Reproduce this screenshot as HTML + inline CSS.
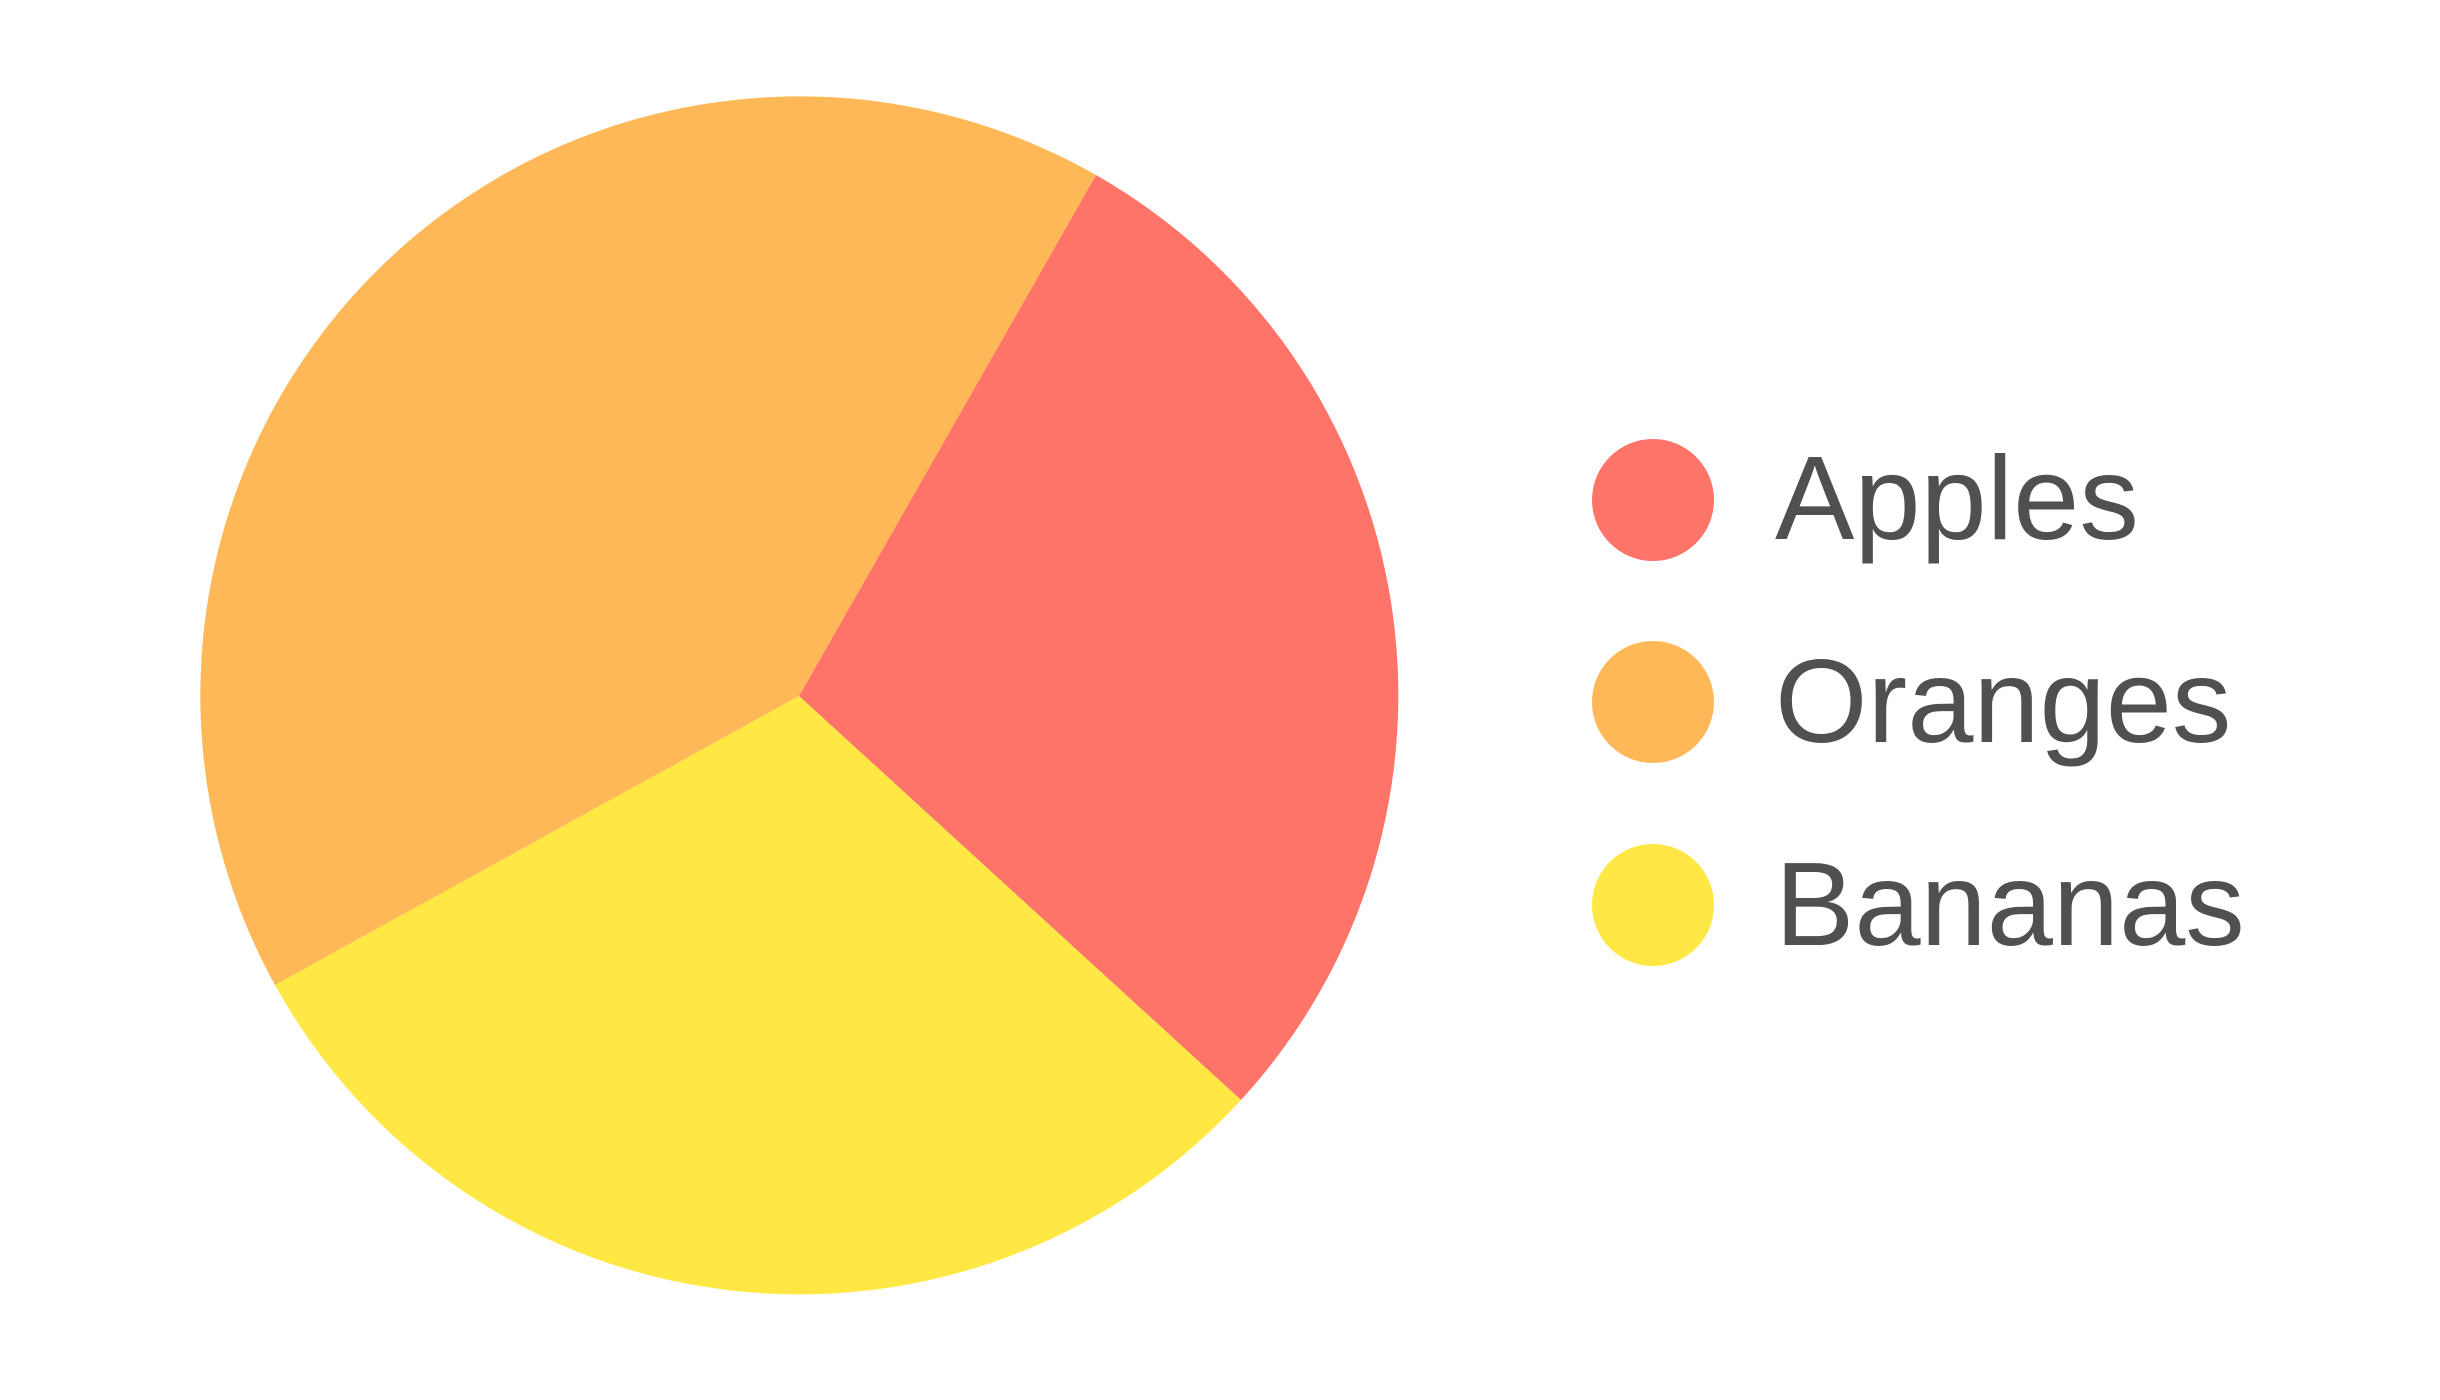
<!DOCTYPE html>
<html><head><meta charset="utf-8"><style>
html,body{margin:0;padding:0;background:#fff;}
svg{display:block}
</style></head><body>
<svg width="2440" height="1400" viewBox="0 0 2440 1400" xmlns="http://www.w3.org/2000/svg">
<rect width="2440" height="1400" fill="#fff"/>
<path d="M799 696 L1096 175 A599 599 0 0 1 1241 1100 Z" fill="#ff7468"/>
<path d="M799 696 L1241 1100 A599 599 0 0 1 275 985 Z" fill="#ffe843"/>
<path d="M799 696 L275 985 A599 599 0 0 1 1096 175 Z" fill="#ffb857"/>
<circle cx="1653" cy="500" r="61" fill="#ff7468"/>
<circle cx="1653" cy="702" r="61" fill="#ffb857"/>
<circle cx="1653" cy="905" r="61" fill="#ffe843"/>
<g font-family="Liberation Sans, sans-serif" font-size="119" fill="#505050">
<text x="1775" y="539">Apples</text>
<text x="1775" y="742">Oranges</text>
<text x="1775" y="945">Bananas</text>
</g>
</svg>
</body></html>
